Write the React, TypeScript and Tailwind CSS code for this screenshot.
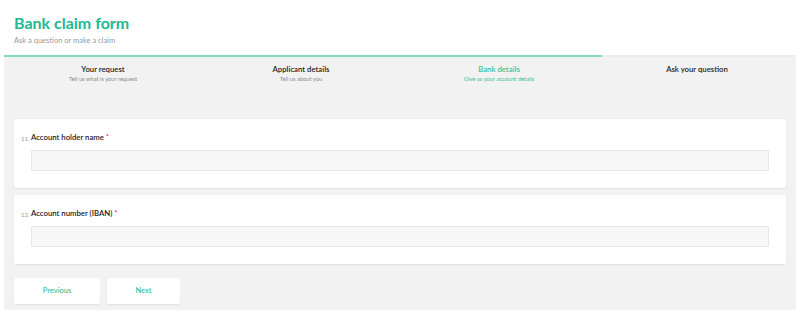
const steps = [
  { title: "Your request", sub: "Tell us what is your request" },
  { title: "Applicant details", sub: "Tell us about you" },
  { title: "Bank details", sub: "Give us your account details", active: true },
  { title: "Ask your question", sub: "" },
];

const fields = [
  { num: "11.", label: "Account holder name" },
  { num: "12.", label: "Account number (IBAN)" },
];

const App = () => {
  return (
    <div className="w-[800px] h-[314px] bg-white px-[4px] font-['Lato',sans-serif] overflow-hidden">
      <div className="pl-[10px] pt-[13px] h-[55px]">
        <h1 className="text-[16px] leading-[20px] font-bold text-[#22b893]">Bank claim form</h1>
        <p className="text-[7.5px] leading-[10px] mt-[3px] text-[#9a9a9a]">Ask a question or make a claim</p>
      </div>

      <div className="h-[2px] bg-[#ececec]">
        <div className="h-full w-[75.5%] bg-[#86d9c3]"></div>
      </div>

      <div className="bg-[#f2f2f2] pb-[6px]">
        <div className="grid grid-cols-4 h-[62px] pt-[7px]">
          {steps.map((s) => (
            <div key={s.title} className="flex flex-col items-center">
              <div
                className={
                  s.active
                    ? "text-[7.75px] leading-[11px] font-semibold text-[#3cbf9d]"
                    : "text-[7.75px] leading-[11px] font-semibold text-[#222]"
                }
              >
                {s.title}
              </div>
              {s.sub && (
                <div
                  className={
                    s.active
                      ? "text-[5.75px] leading-[8px] text-[#3cbf9d]"
                      : "text-[5.75px] leading-[8px] text-[#8a8a8a]"
                  }
                >
                  {s.sub}
                </div>
              )}
            </div>
          ))}
        </div>

        <div className="flex flex-col gap-[7px] px-[10px]">
          {fields.map((f) => (
            <div key={f.num} className="bg-white rounded-[2px] shadow-[0_1px_2px_rgba(0,0,0,0.08)] h-[69px] pt-[13px] pl-[7px] pr-[17px]">
              <div className="flex items-center h-[12px]">
                <span className="text-[6px] text-[#9a9a9a] w-[10px]">{f.num}</span>
                <span className="text-[7.75px] font-semibold text-[#222]">
                  {f.label} <span className="text-[#e0245e]">*</span>
                </span>
              </div>
              <div className="ml-[10px] mt-[6px] h-[21px] bg-[#f7f7f7] border border-[#e6e6e6] rounded-[1px]"></div>
            </div>
          ))}
        </div>

        <div className="flex gap-[7px] px-[10px] mt-[14px]">
          <button className="w-[86px] h-[26px] bg-white rounded-[2px] shadow-[0_1px_2px_rgba(0,0,0,0.08)] text-[7.5px] font-semibold text-[#3cbf9d]">
            Previous
          </button>
          <button className="w-[73px] h-[26px] bg-white rounded-[2px] shadow-[0_1px_2px_rgba(0,0,0,0.08)] text-[7.5px] font-semibold text-[#3cbf9d]">
            Next
          </button>
        </div>
      </div>
    </div>
  );
};

export default App;
